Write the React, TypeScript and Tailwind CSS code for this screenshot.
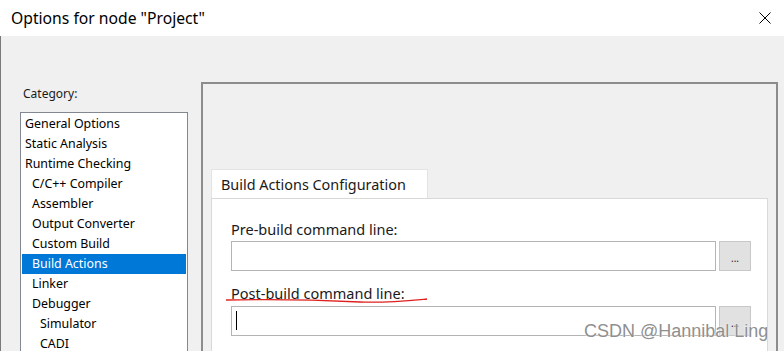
import React from "react";

const items: { label: string; level: number; selected?: boolean }[] = [
  { label: "General Options", level: 0 },
  { label: "Static Analysis", level: 0 },
  { label: "Runtime Checking", level: 0 },
  { label: "C/C++ Compiler", level: 1 },
  { label: "Assembler", level: 1 },
  { label: "Output Converter", level: 1 },
  { label: "Custom Build", level: 1 },
  { label: "Build Actions", level: 1, selected: true },
  { label: "Linker", level: 1 },
  { label: "Debugger", level: 1 },
  { label: "Simulator", level: 2 },
  { label: "CADI", level: 2 },
];

const indent = ["pl-[3px]", "pl-[10px]", "pl-[18px]"];

export default function App() {
  return (
    <div
      className="relative w-[784px] h-[351px] overflow-hidden bg-[#f0f0f0] text-[#000]"
      style={{ fontFamily: '"Noto Sans", "Open Sans", sans-serif' }}
    >
      {/* Title bar */}
      <div className="h-[36px] bg-white flex items-center justify-between pl-[11px] pr-[13px]">
        <span className="text-[15.7px] leading-[20px] text-black">Options for node "Project"</span>
        <svg width="12" height="12" viewBox="0 0 12 12">
          <path d="M0.5 0.5 L11.5 11.5 M11.5 0.5 L0.5 11.5" stroke="#000" strokeWidth="1" />
        </svg>
      </div>

      {/* Body */}
      <div className="flex h-[315px] border-l border-[#7a7a7a]">
        {/* Left column */}
        <div className="pl-[19px] pt-[50px] w-[200px] flex flex-col">
          <div className="text-[12px] leading-[16px] text-[#1a1a1a] pl-[3px]">Category:</div>
          <div className="mt-[10px] w-[168px] flex-1 bg-white border border-[#828790] p-[1px]">
            {items.map((it) => (
              <div
                key={it.label}
                className={`h-[20px] flex items-center pt-[1px] text-[12.4px] ${indent[it.level]} ${
                  it.selected ? "bg-[#0078d7] text-white" : "text-black"
                }`}
              >
                {it.label}
              </div>
            ))}
          </div>
        </div>

        {/* Right panel */}
        <div className="mt-[46px] w-[577px] flex-none border-2 border-b-0 border-[#8c8c8c] pl-[8px] pr-[8px] pt-[85px] flex flex-col">
          <div className="w-[217px] h-[30px] bg-white border border-b-0 border-[#e3e3e3] flex items-center pl-[9px] pt-[1px] text-[14.4px] text-[#1a1a1a]">
            Build Actions Configuration
          </div>
          <div className="flex-1 bg-white border border-[#d9d9d9] border-b-0 -mt-[1px] pl-[19px] pt-[20px]">
            <div className="text-[14.5px] leading-[20px] text-[#1a1a1a]">Pre-build command line:</div>
            <div className="mt-[2px] flex gap-[3px]">
              <div className="w-[485px] h-[30px] bg-white border border-[#b4b4b4]" />
              <div className="w-[32px] h-[30px] bg-[#e1e1e1] border border-[#c8c8c8] flex items-center justify-center text-[10px] leading-none pt-[4px] text-[#222]">
                ...
              </div>
            </div>
            <div className="mt-[12px] text-[14.5px] leading-[20px] text-[#1a1a1a]">Post-build command line:</div>
            <div className="mt-[3px] flex gap-[3px]">
              <div className="w-[485px] h-[30px] bg-white border border-[#b4b4b4] pl-[4px] pt-[4px]">
                <div className="w-[1px] h-[19px] bg-black" />
              </div>
              <div className="w-[32px] h-[30px] bg-[#e1e1e1] border border-[#c8c8c8] flex items-center justify-center text-[10px] leading-none pt-[4px] text-[#222]">
                ...
              </div>
            </div>
          </div>
        </div>
      </div>

      {/* Red annotation underline */}
      <svg className="absolute left-0 top-0 pointer-events-none" width="784" height="351">
        <path
          d="M226 300 C 270 299, 320 300, 360 302 C 385 303, 405 301, 427 299"
          stroke="#e0201e"
          strokeWidth="1.3"
          fill="none"
        />
      </svg>

      {/* Watermark */}
      <div
        className="absolute left-[584px] top-[321px] text-[18px] leading-[20px] text-[#8f8f8f] whitespace-nowrap"
        style={{ fontFamily: '"Liberation Sans", Arial, sans-serif', textShadow: "0 0 2px #fff, 0 0 1px #fff" }}
      >
        CSDN @Hannibal Ling
      </div>
    </div>
  );
}
